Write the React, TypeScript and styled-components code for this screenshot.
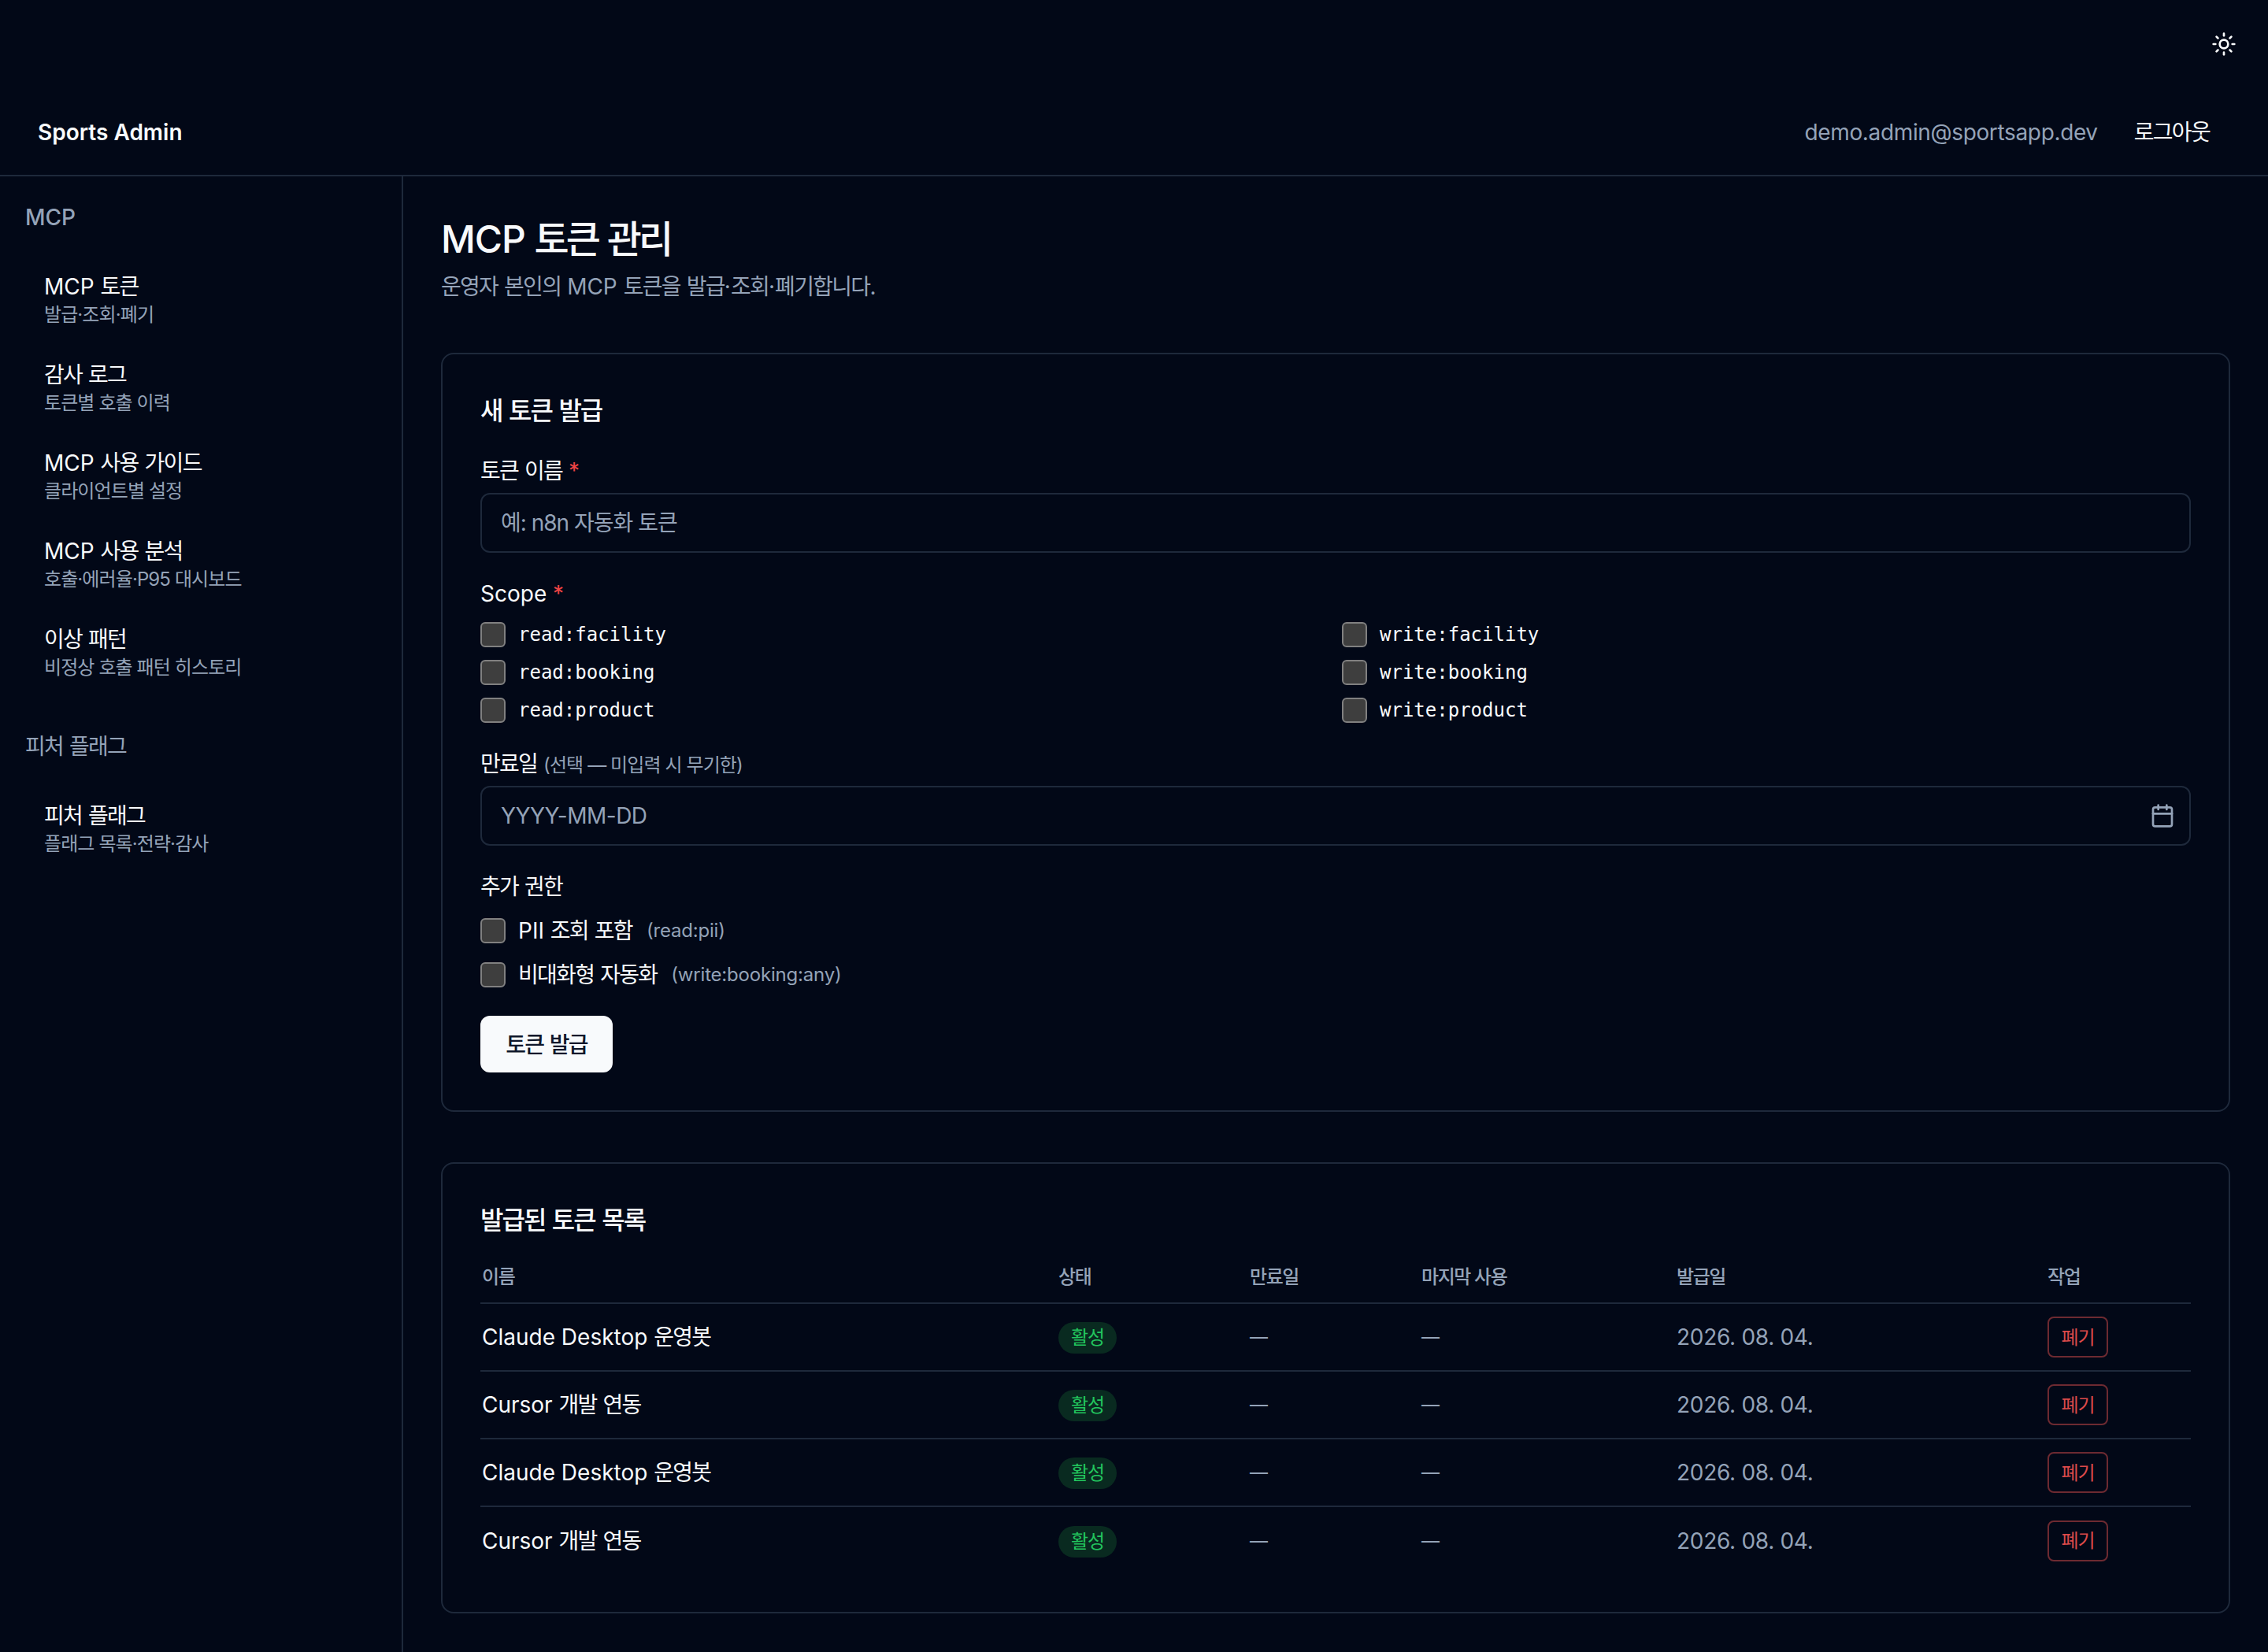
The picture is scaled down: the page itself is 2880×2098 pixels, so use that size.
import React from "react";
import styled, { createGlobalStyle } from "styled-components";
import { Sun, Calendar } from "lucide-react";

const sans = `Inter, "Noto Sans CJK KR", sans-serif`;
const bg = "#020817";
const line = "#1e293b";
const muted = "#94a3b8";
const fg = "#f8fafc";

const Global = createGlobalStyle`
  html, body { margin: 0; padding: 0; background: ${bg}; }
  * { box-sizing: border-box; }
  body { font-family: ${sans}; color: ${fg}; font-size: 28px; line-height: 40px; }
`;

const Hangul = styled.span`
  letter-spacing: -1.7px;
`;

function Ko({ children }: { children: string }) {
  const parts = children.split(/([\uAC00-\uD7A3]+)/);
  return (
    <>
      {parts.map((p, i) => (i % 2 ? <Hangul key={i}>{p}</Hangul> : p))}
    </>
  );
}

const Page = styled.div`
  width: 2880px;
  height: 2098px;
  overflow: hidden;
  position: relative;
  background: ${bg};
`;
const ThemeToggle = styled.button`
  position: absolute;
  top: 40px;
  right: 40px;
  width: 32px;
  height: 32px;
  padding: 0;
  border: 0;
  background: none;
  color: ${fg};
`;
const Header = styled.header`
  height: 224px;
  padding: 114px 48px 0;
  display: flex;
  align-items: center;
  justify-content: space-between;
  border-bottom: 2px solid ${line};
`;
const Brand = styled.div`
  font-size: 28px;
  font-weight: 600;
`;
const HeaderRight = styled.div`
  display: flex;
  align-items: center;
  gap: 46px;
  margin-right: 26px;
`;
const Email = styled.span`
  color: ${muted};
  font-size: 28px;
  letter-spacing: -0.35px;
`;
const Logout = styled.span`
  font-size: 28px;
  font-weight: 400;
`;
const Body = styled.div`
  display: flex;
  height: 1874px;
`;
const Sidebar = styled.aside`
  width: 512px;
  flex: none;
  border-right: 2px solid ${line};
  padding: 32px 32px;
`;
const SectionLabel = styled.div<{ $strong?: boolean }>`
  color: ${muted};
  font-size: 28px;
  font-weight: ${(p) => (p.$strong ? 500 : 400)};
  margin-bottom: 28px;
`;
const NavList = styled.nav`
  display: flex;
  flex-direction: column;
  margin-bottom: 44px;
`;
const NavItem = styled.a`
  display: block;
  padding: 20px 24px;
`;
const NavTitle = styled.div`
  font-size: 28px;
  line-height: 40px;
  font-weight: 400;
`;
const NavSub = styled.div`
  font-size: 24px;
  line-height: 32px;
  color: ${muted};
  letter-spacing: -0.9px;
`;
const Main = styled.main`
  flex: 1;
  padding: 48px;
  min-width: 0;
`;
const PageTitle = styled.h1`
  margin: 0;
  font-size: 48px;
  line-height: 64px;
  font-weight: 500;
  letter-spacing: -1px;
  ${Hangul} { letter-spacing: -4px; }
`;
const PageSub = styled.p`
  margin: 8px 0 64px;
  font-size: 28px;
  line-height: 40px;
  color: ${muted};
`;
const Card = styled.section`
  width: 2272px;
  border: 2px solid ${line};
  border-radius: 16px;
  padding: 48px;
  margin-bottom: 64px;
`;
const CardTitle = styled.h2`
  margin: 0 0 32px;
  font-size: 32px;
  line-height: 48px;
  font-weight: 500;
  ${Hangul} { letter-spacing: -2px; }
`;
const FieldLabel = styled.div<{ $gap?: number }>`
  font-size: 28px;
  line-height: 40px;
  font-weight: 400;
  margin-bottom: ${(p) => p.$gap ?? 8}px;
`;
const Star = styled.span`
  color: #ef4444;
`;
const Hint = styled.span`
  color: ${muted};
  font-size: 24px;
  line-height: 1;
  font-weight: 400;
  letter-spacing: -0.9px;
`;
const InputWrap = styled.div`
  position: relative;
  margin-bottom: 32px;
`;
const TextInput = styled.input<{ $tight?: boolean }>`
  display: block;
  width: 100%;
  height: 76px;
  padding: 0 24px;
  background: transparent;
  border: 2px solid ${line};
  border-radius: 12px;
  color: ${fg};
  font: 400 28px ${sans};
  letter-spacing: ${(p) => (p.$tight ? "-1px" : "-0.5px")};
  outline: none;
  &::placeholder { color: ${muted}; opacity: 1; }
`;
const CalendarSlot = styled.span`
  position: absolute;
  right: 20px;
  top: 22px;
  width: 32px;
  height: 32px;
  color: ${muted};
`;
const ScopeGrid = styled.div`
  display: grid;
  grid-template-columns: 1fr 1fr;
  gap: 16px;
  margin-bottom: 32px;
`;
const CheckRow = styled.label`
  display: flex;
  align-items: center;
  gap: 16px;
  height: 32px;
`;
const Box = styled.input.attrs({ type: "checkbox" })`
  appearance: none;
  width: 32px;
  height: 32px;
  margin: 0;
  flex: none;
  background: #3e3e3e;
  border: 2px solid #808080;
  border-radius: 6px;
`;
const Mono = styled.span`
  font-family: "DejaVu Sans Mono", monospace;
  font-size: 24px;
`;
const ExtraList = styled.div`
  display: flex;
  flex-direction: column;
  gap: 24px;
  margin: 20px 0 36px;
`;
const ExtraNote = styled.span`
  color: ${muted};
  font-size: 24px;
  margin-left: 2px;
  letter-spacing: -0.2px;
`;
const Submit = styled.button`
  display: block;
  width: 168px;
  height: 72px;
  padding: 0 0 2px;
  border: 0;
  border-radius: 12px;
  background: ${fg};
  color: #0f172a;
  font: 500 28px ${sans};
`;
const Table = styled.table`
  width: 100%;
  table-layout: fixed;
  border-collapse: collapse;
`;
const Th = styled.th`
  text-align: left;
  font-size: 24px;
  font-weight: 500;
  color: ${muted};
  padding: 0 2px 16px;
  line-height: 32px;
  letter-spacing: -1.4px;
  border-bottom: 2px solid ${line};
`;
const Tr = styled.tr`
  height: 86px;
  border-bottom: 2px solid ${line};
  &:last-child { border-bottom: 0; }
`;
const NameTd = styled.td`
  padding: 0 2px;
  font-size: 28px;
  font-weight: 400;
`;
const DateTd = styled.td`
  padding: 0 2px;
  font-size: 28px;
  color: ${muted};
  letter-spacing: -0.3px;
`;
const DashTd = styled.td`
  padding: 0 2px;
  font-size: 23px;
  color: ${muted};
`;
const Cell = styled.td`
  padding: 0 2px;
`;
const Badge = styled.span`
  display: inline-flex;
  align-items: center;
  justify-content: center;
  width: 74px;
  height: 40px;
  border-radius: 20px;
  background: #092a20;
  color: #22c55e;
  font-size: 24px;
  letter-spacing: -1px;
`;
const Revoke = styled.button`
  display: block;
  width: 77px;
  height: 52px;
  padding: 0 0 4px;
  background: transparent;
  border: 2px solid #6d2a31;
  border-radius: 8px;
  color: #dc4a4a;
  font: 400 24px ${sans};
  letter-spacing: -1px;
`;

const navOne = [
  ["MCP 토큰", "발급·조회·폐기"],
  ["감사 로그", "토큰별 호출 이력"],
  ["MCP 사용 가이드", "클라이언트별 설정"],
  ["MCP 사용 분석", "호출·에러율·P95 대시보드"],
  ["이상 패턴", "비정상 호출 패턴 히스토리"],
];
const scopes = [
  "read:facility", "write:facility",
  "read:booking", "write:booking",
  "read:product", "write:product",
];
const tokens = ["Claude Desktop 운영봇", "Cursor 개발 연동", "Claude Desktop 운영봇", "Cursor 개발 연동"];

export default function App() {
  return (
    <Page>
      <Global />
      <ThemeToggle aria-label="theme"><Sun size={32} /></ThemeToggle>
      <Header>
        <Brand>Sports Admin</Brand>
        <HeaderRight>
          <Email>demo.admin@sportsapp.dev</Email>
          <Logout><Ko>로그아웃</Ko></Logout>
        </HeaderRight>
      </Header>
      <Body>
        <Sidebar>
          <SectionLabel $strong>MCP</SectionLabel>
          <NavList>
            {navOne.map(([t, s]) => (
              <NavItem key={t}><NavTitle><Ko>{t}</Ko></NavTitle><NavSub>{s}</NavSub></NavItem>
            ))}
          </NavList>
          <SectionLabel><Ko>피처 플래그</Ko></SectionLabel>
          <NavList>
            <NavItem><NavTitle><Ko>피처 플래그</Ko></NavTitle><NavSub>플래그 목록·전략·감사</NavSub></NavItem>
          </NavList>
        </Sidebar>
        <Main>
          <PageTitle><Ko>MCP 토큰 관리</Ko></PageTitle>
          <PageSub><Ko>운영자 본인의 MCP 토큰을 발급·조회·폐기합니다.</Ko></PageSub>
          <Card>
            <CardTitle><Ko>새 토큰 발급</Ko></CardTitle>
            <FieldLabel><Ko>토큰 이름</Ko> <Star>*</Star></FieldLabel>
            <InputWrap><TextInput $tight placeholder="예: n8n 자동화 토큰" /></InputWrap>
            <FieldLabel $gap={16}>Scope <Star>*</Star></FieldLabel>
            <ScopeGrid>
              {scopes.map((s) => (
                <CheckRow key={s}><Box /><Mono>{s}</Mono></CheckRow>
              ))}
            </ScopeGrid>
            <FieldLabel><Ko>만료일</Ko> <Hint>(선택 — 미입력 시 무기한)</Hint></FieldLabel>
            <InputWrap>
              <TextInput placeholder="YYYY-MM-DD" />
              <CalendarSlot><Calendar size={32} /></CalendarSlot>
            </InputWrap>
            <FieldLabel><Ko>추가 권한</Ko></FieldLabel>
            <ExtraList>
              <CheckRow><Box /><span><Ko>PII 조회 포함</Ko></span><ExtraNote>(read:pii)</ExtraNote></CheckRow>
              <CheckRow><Box /><span><Ko>비대화형 자동화</Ko></span><ExtraNote>(write:booking:any)</ExtraNote></CheckRow>
            </ExtraList>
            <Submit><Ko>토큰 발급</Ko></Submit>
          </Card>
          <Card>
            <CardTitle><Ko>발급된 토큰 목록</Ko></CardTitle>
            <Table>
              <colgroup>
                <col width="732" /><col width="243" /><col width="218" /><col width="324" /><col width="471" /><col />
              </colgroup>
              <thead>
                <tr>
                  <Th>이름</Th><Th>상태</Th><Th>만료일</Th><Th>마지막 사용</Th><Th>발급일</Th><Th>작업</Th>
                </tr>
              </thead>
              <tbody>
                {tokens.map((n, i) => (
                  <Tr key={i}>
                    <NameTd><Ko>{n}</Ko></NameTd>
                    <Cell><Badge>활성</Badge></Cell>
                    <DashTd>—</DashTd>
                    <DashTd>—</DashTd>
                    <DateTd>2026. 08. 04.</DateTd>
                    <Cell><Revoke>폐기</Revoke></Cell>
                  </Tr>
                ))}
              </tbody>
            </Table>
          </Card>
        </Main>
      </Body>
    </Page>
  );
}
